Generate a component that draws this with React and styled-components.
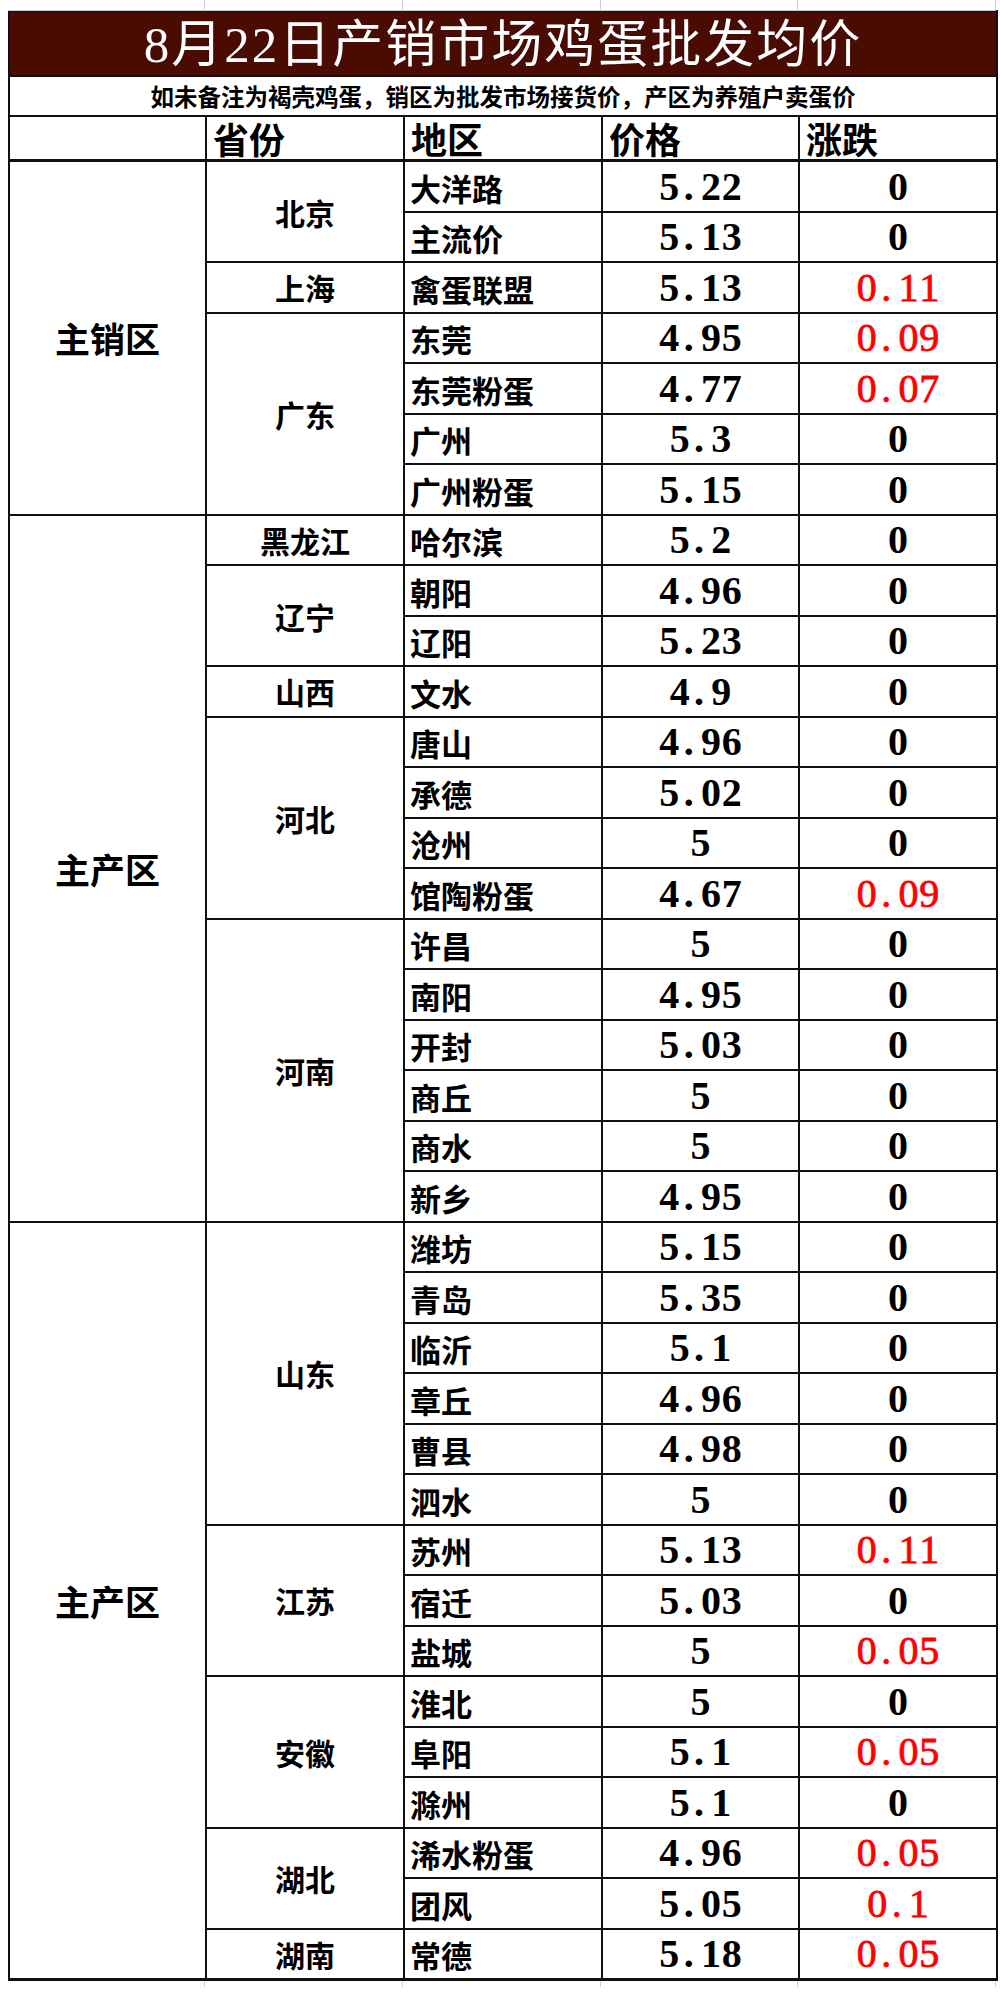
import React from 'react'
import styled, { createGlobalStyle } from 'styled-components'

const GlobalStyle = createGlobalStyle`
  html, body {
    margin: 0;
    padding: 0;
    background: #fff;
  }
  body {
    font-family: "Noto Sans CJK SC", sans-serif;
  }
`

const sections = [
  {
    area: '主销区',
    provinces: [
      { name: '北京', rows: [['大洋路', '5.22', '0'], ['主流价', '5.13', '0']] },
      { name: '上海', rows: [['禽蛋联盟', '5.13', '0.11']] },
      {
        name: '广东',
        rows: [
          ['东莞', '4.95', '0.09'],
          ['东莞粉蛋', '4.77', '0.07'],
          ['广州', '5.3', '0'],
          ['广州粉蛋', '5.15', '0'],
        ],
      },
    ],
  },
  {
    area: '主产区',
    provinces: [
      { name: '黑龙江', rows: [['哈尔滨', '5.2', '0']] },
      { name: '辽宁', rows: [['朝阳', '4.96', '0'], ['辽阳', '5.23', '0']] },
      { name: '山西', rows: [['文水', '4.9', '0']] },
      {
        name: '河北',
        rows: [
          ['唐山', '4.96', '0'],
          ['承德', '5.02', '0'],
          ['沧州', '5', '0'],
          ['馆陶粉蛋', '4.67', '0.09'],
        ],
      },
      {
        name: '河南',
        rows: [
          ['许昌', '5', '0'],
          ['南阳', '4.95', '0'],
          ['开封', '5.03', '0'],
          ['商丘', '5', '0'],
          ['商水', '5', '0'],
          ['新乡', '4.95', '0'],
        ],
      },
    ],
  },
  {
    area: '主产区',
    provinces: [
      {
        name: '山东',
        rows: [
          ['潍坊', '5.15', '0'],
          ['青岛', '5.35', '0'],
          ['临沂', '5.1', '0'],
          ['章丘', '4.96', '0'],
          ['曹县', '4.98', '0'],
          ['泗水', '5', '0'],
        ],
      },
      { name: '江苏', rows: [['苏州', '5.13', '0.11'], ['宿迁', '5.03', '0'], ['盐城', '5', '0.05']] },
      { name: '安徽', rows: [['淮北', '5', '0'], ['阜阳', '5.1', '0.05'], ['滁州', '5.1', '0']] },
      { name: '湖北', rows: [['浠水粉蛋', '4.96', '0.05'], ['团风', '5.05', '0.1']] },
      { name: '湖南', rows: [['常德', '5.18', '0.05']] },
    ],
  },
]

const Page = styled.div`
  padding: 0 4px 0 8px;
  width: 988px;
`

const GridStrip = styled.div`
  display: grid;
  grid-template-columns: 197px 198px 198px 197px 198px;
  height: ${(p) => p.$h}px;
`

const GridCell = styled.div`
  border-right: 1px solid #c9d0e4;
  border-bottom: ${(p) => (p.$line ? '1px solid #c9d0e4' : 'none')};
  height: ${(p) => p.$tick || p.$h}px;
`

const Sheet = styled.table`
  width: 988px;
  table-layout: fixed;
  border-collapse: separate;
  border-spacing: 0;
  border-left: 2px solid #111;
  border-top: 2px solid #111;
  border-bottom: 1px solid #111;
  color: #000;
`

const TitleCell = styled.td`
  height: 63px;
  background: #4a0b01;
  color: #fff;
  text-align: center;
  vertical-align: bottom;
  padding: 0;
  font-family: "Liberation Serif", "Noto Sans CJK SC", serif;
  font-size: 51px;
  line-height: 60px;
  letter-spacing: 2px;
  text-shadow: 0 0 1px rgba(0, 0, 40, 0.6);
  border-right: 2px solid #111;
  border-bottom: 2px solid #111;
`

const NoteCell = styled.td`
  height: 36px;
  text-align: center;
  vertical-align: middle;
  font-size: 23.5px;
  font-weight: 700;
  line-height: 34px;
  border-right: 2px solid #111;
  border-bottom: 2px solid #111;
`

const HeadRow = styled.tr`
  height: 44px;
`

const HeadCell = styled.th`
  text-align: left;
  vertical-align: bottom;
  padding: 0 0 0 6px;
  font-size: 36px;
  font-weight: 700;
  line-height: 42px;
  border-right: 2px solid #111;
  border-bottom: 3px solid #111;
`

const Row = styled.tr`
  height: 50.5px;
`

const Cell = styled.td`
  padding: 0;
  border-right: 2px solid #111;
  border-bottom: 2px solid #111;
  vertical-align: middle;
`

const AreaCell = styled(Cell)`
  text-align: center;
  font-size: 35px;
  font-weight: 700;
`

const ProvinceCell = styled(Cell)`
  text-align: center;
  font-size: 30px;
  font-weight: 700;
`

const RegionCell = styled(Cell)`
  text-align: left;
  padding: 2px 0 0 5px;
  font-size: 31px;
  font-weight: 700;
  white-space: nowrap;
`

const NumberCell = styled(Cell)`
  text-align: center;
  vertical-align: bottom;
  padding-bottom: 4px;
  font-family: "Liberation Serif", serif;
  font-size: 40px;
  line-height: 40px;
  font-weight: ${(p) => (p.$up ? 400 : 700)};
  color: ${(p) => (p.$up ? '#ff0000' : '#000')};
  -webkit-text-stroke: ${(p) => (p.$up ? '0.8px #ff0000' : '0')};
`

const Ch = styled.span`
  display: inline-block;
  width: 0.52em;
  text-align: ${(p) => (p.$dot ? 'left' : 'center')};
  text-indent: ${(p) => (p.$dot ? '0.1em' : '0')};
`

const Num = ({ value }) =>
  value.split('').map((c, i) => (
    <Ch key={i} $dot={c === '.'}>
      {c}
    </Ch>
  ))

const cols = [197, 198, 198, 197, 198]

export default function App() {
  return (
    <>
      <GlobalStyle />
      <Page>
        <GridStrip $h={10}>
          {cols.map((w, i) => (
            <GridCell key={i} $h={10} $line />
          ))}
        </GridStrip>
        <Sheet>
          <colgroup>
            {cols.map((w, i) => (
              <col key={i} style={{ width: w }} />
            ))}
          </colgroup>
          <tbody>
            <tr>
              <TitleCell colSpan={5}>8月22日产销市场鸡蛋批发均价</TitleCell>
            </tr>
            <tr>
              <NoteCell colSpan={5}>
                如未备注为褐壳鸡蛋，销区为批发市场接货价，产区为养殖户卖蛋价
              </NoteCell>
            </tr>
            <HeadRow>
              <HeadCell />
              <HeadCell>省份</HeadCell>
              <HeadCell>地区</HeadCell>
              <HeadCell>价格</HeadCell>
              <HeadCell>涨跌</HeadCell>
            </HeadRow>
            {sections.map((section, si) => {
              const total = section.provinces.reduce((n, p) => n + p.rows.length, 0)
              return section.provinces.map((province, pi) =>
                province.rows.map(([region, price, change], ri) => (
                  <Row key={`${si}-${pi}-${ri}`}>
                    {pi === 0 && ri === 0 && (
                      <AreaCell rowSpan={total}>{section.area}</AreaCell>
                    )}
                    {ri === 0 && (
                      <ProvinceCell rowSpan={province.rows.length}>
                        {province.name}
                      </ProvinceCell>
                    )}
                    <RegionCell>{region}</RegionCell>
                    <NumberCell>
                      <Num value={price} />
                    </NumberCell>
                    <NumberCell $up={change !== '0'}>
                      <Num value={change} />
                    </NumberCell>
                  </Row>
                ))
              )
            })}
          </tbody>
        </Sheet>
        <GridStrip $h={30}>
          {cols.map((w, i) => (
            <GridCell key={i} $tick={6} />
          ))}
        </GridStrip>
      </Page>
    </>
  )
}
